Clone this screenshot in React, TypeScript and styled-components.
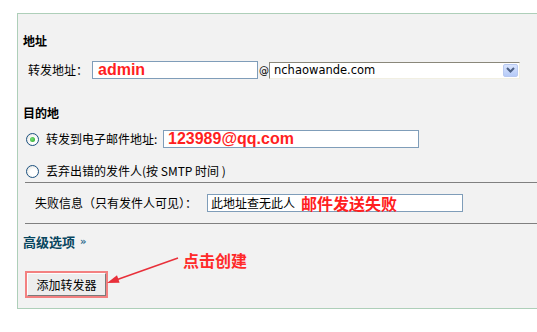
import React from "react";
import styled, { createGlobalStyle } from "styled-components";

const Global = createGlobalStyle`
  html, body {
    margin: 0;
    padding: 0;
    background: #ffffff;
    overflow: hidden;
    font-family: "Noto Sans CJK SC", "DejaVu Sans", sans-serif;
    font-size: 12px;
    color: #000;
  }
`;

const Panel = styled.div`
  position: relative;
  box-sizing: border-box;
  margin: 13px 0 0 17px;
  width: 540px;
  background: #f2f2f2;
  border: 1px solid #aecfb9;
  border-right: none;
  padding: 19px 0 12px 0;
`;

const SectionTitle = styled.div<{ $top?: number }>`
  margin-top: ${(p) => p.$top ?? 0}px;
  padding-left: 5px;
  height: 16px;
  line-height: 16px;
  font-size: 12px;
  font-weight: bold;
`;

const Row = styled.div<{ $top: number; $left: number; $h?: number }>`
  display: flex;
  align-items: center;
  margin-top: ${(p) => p.$top}px;
  padding-left: ${(p) => p.$left}px;
  height: ${(p) => p.$h ?? 18}px;
`;

const Label = styled.span<{ $w?: number }>`
  display: inline-block;
  width: ${(p) => (p.$w ? `${p.$w}px` : "auto")};
  line-height: 16px;
  font-size: 12px;
  white-space: nowrap;
`;

const TextBox = styled.div<{ $w: number; $h?: number; $pad?: number }>`
  box-sizing: border-box;
  width: ${(p) => p.$w}px;
  height: ${(p) => p.$h ?? 18}px;
  border: 1px solid #7f9db9;
  background: #fff;
  display: flex;
  align-items: center;
  padding-left: ${(p) => p.$pad ?? 4}px;
  white-space: nowrap;
`;

const RedValue = styled.span`
  font-family: "Liberation Sans", Arial, sans-serif;
  font-weight: bold;
  font-size: 16px;
  line-height: 16px;
  color: #ff1f1f;
`;

const PlainValue = styled.span`
  font-size: 12px;
  line-height: 16px;
`;

const RedNote = styled.span`
  margin-left: 6px;
  font-size: 16px;
  font-weight: bold;
  line-height: 16px;
  color: #ff2020;
`;

const At = styled.span`
  font-family: "DejaVu Sans", sans-serif;
  font-size: 10px;
  width: 10px;
  margin-left: 1px;
  text-align: center;
`;

const SelectBox = styled.div`
  box-sizing: border-box;
  width: 251px;
  height: 17px;
  background: #fff;
  border: 1px solid;
  border-color: #8a877a #f1efe2 #f1efe2 #8a877a;
  display: flex;
  align-items: center;
  justify-content: space-between;
  padding: 0 1px 0 4px;
  font-family: "DejaVu Sans", sans-serif;
  font-size: 11.5px;
  color: #000;
`;

const DropButton = styled.div`
  width: 15px;
  height: 13px;
  border-radius: 2px;
  background: linear-gradient(#d9e4fd, #b6cbf8);
  border: 1px solid #b8c9f1;
  box-sizing: border-box;
  display: flex;
  align-items: center;
  justify-content: center;
`;

const Radio = styled.span<{ $checked?: boolean }>`
  box-sizing: border-box;
  width: 13px;
  height: 13px;
  border-radius: 50%;
  border: 1px solid #1c5180;
  background: radial-gradient(circle at 60% 60%, #ffffff 35%, #dcdcd5 100%);
  display: inline-flex;
  align-items: center;
  justify-content: center;
  margin-right: 7px;
  &::after {
    content: "";
    display: ${(p) => (p.$checked ? "block" : "none")};
    width: 5px;
    height: 5px;
    border-radius: 50%;
    background: radial-gradient(circle at 40% 40%, #7ae07a, #21a121);
  }
`;

const Rule = styled.div<{ $top: number }>`
  margin-top: ${(p) => p.$top}px;
  margin-left: 7px;
  height: 1px;
  background: #808080;
`;

const AdvancedLink = styled.div`
  margin-top: 10px;
  padding-left: 5px;
  height: 16px;
  line-height: 16px;
  font-size: 13px;
  font-weight: bold;
  color: #08465f;
  display: flex;
  align-items: center;
`;

const Chevron = styled.span`
  margin-left: 5px;
  font-family: "DejaVu Sans", sans-serif;
  font-size: 10px;
  font-weight: bold;
  color: #2f6d8e;
`;

const ButtonWrap = styled.div`
  margin-top: 23px;
  margin-left: 9px;
`;

const Button = styled.button`
  box-sizing: border-box;
  width: 79px;
  height: 23px;
  padding: 0;
  background: #ededed;
  border: 1px solid;
  border-color: #fdfdfd #7a7a7a #7a7a7a #fdfdfd;
  outline: 2px solid #f38080;
  font-family: "Noto Sans CJK SC", sans-serif;
  font-size: 12px;
  line-height: 16px;
  color: #000;
`;

const Annotation = styled.div`
  position: absolute;
  left: 165px;
  top: 238px;
  font-size: 16px;
  font-weight: bold;
  line-height: 16px;
  color: #ff2a2a;
  white-space: nowrap;
`;

const ArrowSvg = styled.svg`
  position: absolute;
  left: 80px;
  top: 240px;
  overflow: visible;
`;

export default function App() {
  return (
    <>
      <Global />
      <Panel>
        <SectionTitle>地址</SectionTitle>
        <Row $top={12} $left={10}>
          <Label $w={64}>转发地址：</Label>
          <TextBox $w={166} $pad={5}>
            <RedValue>admin</RedValue>
          </TextBox>
          <At>@</At>
          <SelectBox>
            <span>nchaowande.com</span>
            <DropButton>
              <svg width="9" height="6" viewBox="0 0 9 6">
                <path d="M1 1 L4.5 4.5 L8 1" fill="none" stroke="#4d6185" strokeWidth="2" />
              </svg>
            </DropButton>
          </SelectBox>
        </Row>

        <SectionTitle $top={26}>目的地</SectionTitle>
        <Row $top={9} $left={8}>
          <Radio $checked />
          <Label $w={117}>转发到电子邮件地址:</Label>
          <TextBox $w={256} $pad={4}>
            <RedValue>123989@qq.com</RedValue>
          </TextBox>
        </Row>
        <Row $top={14} $left={8}>
          <Radio />
          <Label>丢弃出错的发件人(按 SMTP 时间 )</Label>
        </Row>
        <Rule $top={2} />
        <Row $top={11} $left={17}>
          <Label $w={172}>失败信息（只有发件人可见）：</Label>
          <TextBox $w={256} $pad={3}>
            <PlainValue>此地址查无此人</PlainValue>
            <RedNote>邮件发送失败</RedNote>
          </TextBox>
        </Row>
        <Rule $top={11} />
        <AdvancedLink>
          高级选项<Chevron>»</Chevron>
        </AdvancedLink>
        <ButtonWrap>
          <Button type="button">添加转发器</Button>
        </ButtonWrap>

        <ArrowSvg width="90" height="35" viewBox="0 0 90 35">
          <line x1="80" y1="4" x2="18" y2="26" stroke="#e8303a" strokeWidth="1.5" />
          <polygon points="9,29 21.6,28.8 19,21.2" fill="#e8303a" />
        </ArrowSvg>
        <Annotation>点击创建</Annotation>
      </Panel>
    </>
  );
}
